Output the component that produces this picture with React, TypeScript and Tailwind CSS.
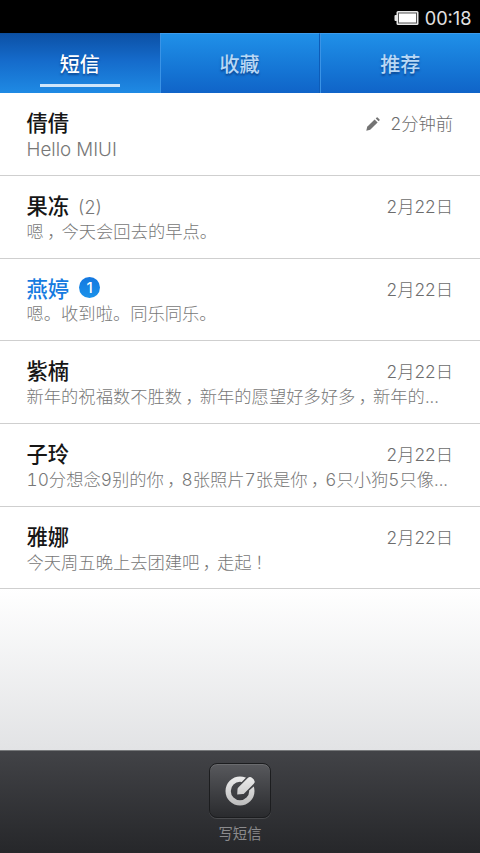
import type { ReactNode } from "react";

type Thread = {
  name: string;
  preview: string;
  date: string;
  height: string;
  count?: number;
  unread?: number;
  draft?: boolean;
};

const threads: Thread[] = [
  { name: "倩倩", preview: "Hello MIUI", date: "2分钟前", draft: true, height: "h-[83px]" },
  { name: "果冻", preview: "嗯，今天会回去的早点。", date: "2月22日", count: 2, height: "h-[83px]" },
  { name: "燕婷", preview: "嗯。收到啦。同乐同乐。", date: "2月22日", unread: 1, height: "h-[82px]" },
  { name: "紫楠", preview: "新年的祝福数不胜数，新年的愿望好多好多，新年的...", date: "2月22日", height: "h-[83px]" },
  { name: "子玲", preview: "10分想念9别的你，8张照片7张是你，6只小狗5只像...", date: "2月22日", height: "h-[83px]" },
  { name: "雅娜", preview: "今天周五晚上去团建吧，走起！", date: "2月22日", height: "h-[82px]" },
];

/* Commas and exclamation marks are set half-width and padded on both sides; Latin runs are a little larger. */
function typeset(text: string): ReactNode[] {
  return text.split(/([，！]|[A-Za-z ]+)/).map((part, i) => {
    if (part === "，" || part === "！") {
      return (
        <span key={i} className="pr-[5.7px] pl-[3.4px] font-['Noto_Sans_CJK_SC'] [font-feature-settings:'halt']">
          {part}
        </span>
      );
    }
    if (/^[A-Za-z ]+$/.test(part)) {
      return (
        <span key={i} className="relative top-[2px] text-[18.8px]">
          {part}
        </span>
      );
    }
    return part;
  });
}

function Battery() {
  return (
    <svg width="26" height="16" viewBox="0 0 26 16" className="shrink-0">
      <rect x="0.5" y="5" width="3" height="6" rx="1" fill="#e8e8e8" />
      <rect x="2.5" y="1" width="22" height="14" rx="1.5" fill="#e8e8e8" />
      <rect x="4" y="2.5" width="19" height="11" fill="#555" />
      <rect x="5" y="3.5" width="17" height="9" fill="#fff" />
    </svg>
  );
}

function Tab({ label, active, divider }: { label: string; active?: boolean; divider?: boolean }) {
  return (
    <div
      className={
        "flex flex-1 flex-col items-center border-t " +
        (active
          ? "border-[#0d4f9e] bg-linear-to-b from-[#0c51a6] via-[#156bcb] via-45% to-[#1f8ae4]"
          : "border-[#3d9cec] bg-linear-to-b from-[#2090e8] to-[#1064c8] shadow-[inset_1px_0_0_#3a93e6]") +
        (divider ? " border-r border-r-[#0d5cb8]" : "")
      }
    >
      <span
        className={
          "mt-[16px] text-[20px] leading-[30px] font-medium [text-shadow:0_2px_2px_rgba(0,30,90,0.5)] " +
          (active ? "text-white" : "text-[#b9d8f5]")
        }
      >
        {label}
      </span>
      {active && <div className="mt-[4px] h-[3px] w-[80px] bg-[#cfe5fa]" />}
    </div>
  );
}

function Row({ t }: { t: Thread }) {
  return (
    <div className={"flex flex-col border-b border-[#cfcfcf] bg-white pr-[27px] pl-[26.5px] " + t.height}>
      <div className="mt-[15px] flex h-[30px] items-center">
        <span className={"text-[21.3px] leading-[30px] font-medium " + (t.unread ? "text-[#157be0]" : "text-[#161616]")}>
          {t.name}
        </span>
        {t.count && <span className="mt-[2px] ml-[9px] text-[18px] font-light text-[#777]">({t.count})</span>}
        {t.unread && (
          <span className="mb-[3px] ml-[10px] flex size-[21px] items-center justify-center rounded-full bg-linear-to-b from-[#1477e0] to-[#1b92ea] text-[15px] leading-none font-medium text-white">
            {t.unread}
          </span>
        )}
        <span className="mt-[2px] ml-auto flex items-center text-[17.3px] font-light text-[#6c6c6c]">
          {t.draft && (
            <svg width="14" height="14" viewBox="0 0 14 14" className="mr-[11px]" fill="#737373">
              <path d="M0.3 13.7 1.2 9.8 8.6 2.4 11.6 5.4 4.2 12.8Z" />
              <path d="M9.7 1.4 10.7 .4Q11.2 0 11.6.4L13.6 2.4Q14 2.8 13.6 3.2L12.6 4.3Z" />
            </svg>
          )}
          {t.date}
        </span>
      </div>
      <div className="-mt-[2px] text-[17.3px] leading-[24px] font-light whitespace-nowrap text-[#777] tabular-nums">
        {typeset(t.preview)}
      </div>
    </div>
  );
}

function ComposeIcon() {
  return (
    <svg width="32" height="32" viewBox="0 0 32 32">
      <defs>
        <linearGradient id="metal" x1="0" y1="0" x2="0" y2="32" gradientUnits="userSpaceOnUse">
          <stop offset="0" stopColor="#efefef" />
          <stop offset="1" stopColor="#b9b9b9" />
        </linearGradient>
        <mask id="penGap">
          <rect width="32" height="32" fill="#fff" />
          <path d="M13.5 19.5 14 12.5 24 2 31.5 8.5 19.5 19Z" fill="#000" stroke="#000" strokeWidth="2" />
        </mask>
      </defs>
      <path
        fillRule="evenodd"
        mask="url(#penGap)"
        fill="url(#metal)"
        d="M16 1.5A14.5 14.5 0 1 0 16 30.5A14.5 14.5 0 1 0 16 1.5ZM16 6.8A9.2 9.2 0 1 1 16 25.2A9.2 9.2 0 1 1 16 6.8Z"
      />
      <path
        fill="url(#metal)"
        d="M13.2 19.6 13.5 14.2Q13.6 13.2 14.3 12.5L23.8 3Q26 1 28.2 3L29.8 4.6Q31.6 6.8 29.8 8.8L20.4 18.2Q19.7 19 18.7 19.1Z"
      />
    </svg>
  );
}

export default function App() {
  return (
    <div className="flex h-[853px] w-[480px] flex-col overflow-hidden bg-white font-['Inter','Noto_Sans_CJK_SC',sans-serif]">
      <div className="flex h-[33px] shrink-0 items-center justify-end gap-[5px] bg-black pt-[3px] pr-[8.5px]">
        <Battery />
        <span className="mt-px text-[18.2px] leading-none text-[#e2e2e2]">00:18</span>
      </div>

      <div className="flex h-[60px] shrink-0">
        <Tab label="短信" active />
        <Tab label="收藏" divider />
        <Tab label="推荐" />
      </div>

      <div className="flex flex-col">
        {threads.map((t) => (
          <Row key={t.name} t={t} />
        ))}
      </div>

      <div className="flex-1 bg-linear-to-b from-white to-[#e2e3e5]" />

      <div className="flex h-[103px] shrink-0 flex-col items-center border-t border-[#77797b] bg-linear-to-b from-[#424347] to-[#26272a]">
        <div className="mt-[12px] flex h-[55px] w-[62px] items-center justify-center rounded-[8px] border border-[#1c1d1f] bg-linear-to-b from-[#58595d] to-[#2a2b2e] shadow-[0_1px_0_#4a4b4e,inset_0_1px_0_#6a6b6e]">
          <ComposeIcon />
        </div>
        <span className="mt-[5px] text-[14.3px] leading-[22px] text-[#8b8b8d]">写短信</span>
      </div>
    </div>
  );
}
